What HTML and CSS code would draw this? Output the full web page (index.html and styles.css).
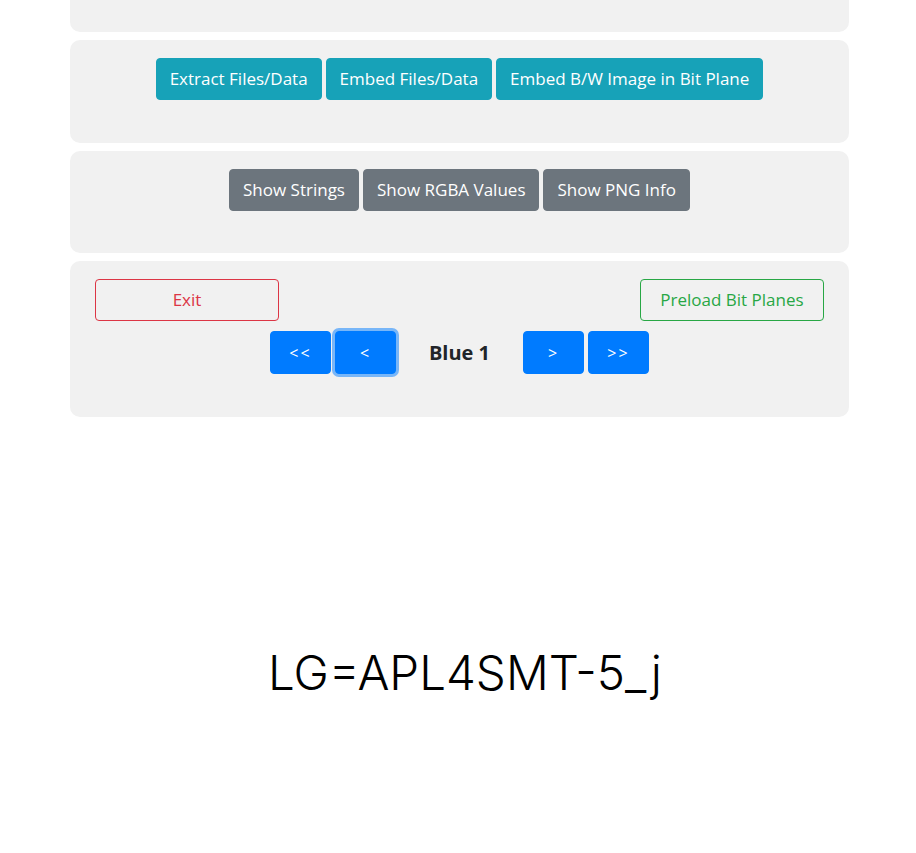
FILE: index.html
```html
<!DOCTYPE html>
<html lang="en">
<head>
    <meta charset="UTF-8">
    <meta name="viewport" content="width=device-width, initial-scale=1.0">
    <title>Bit Plane Viewer</title>
    <link rel="stylesheet" href="styles.css">
</head>
<body>
    <div class="container">
        <div class="panel panel-cut"></div>

        <div class="panel">
            <div class="btn-row">
                <button class="btn btn-info">Extract Files/Data</button>
                <button class="btn btn-info">Embed Files/Data</button>
                <button class="btn btn-info">Embed B/W Image in Bit Plane</button>
            </div>
        </div>

        <div class="panel">
            <div class="btn-row">
                <button class="btn btn-secondary">Show Strings</button>
                <button class="btn btn-secondary">Show RGBA Values</button>
                <button class="btn btn-secondary">Show PNG Info</button>
            </div>
        </div>

        <div class="panel panel-nav">
            <div class="top-row">
                <button class="btn btn-wide btn-outline-danger">Exit</button>
                <button class="btn btn-wide btn-outline-success">Preload Bit Planes</button>
            </div>
            <div class="nav-row">
                <button class="btn btn-nav">&lt;&lt;</button>
                <button class="btn btn-nav focused">&lt;</button>
                <span class="plane-label">Blue 1</span>
                <button class="btn btn-nav">&gt;</button>
                <button class="btn btn-nav">&gt;&gt;</button>
            </div>
        </div>
    </div>

    <!-- rendered bit plane output -->
    <div class="output">LG=APL4SMT-5_j</div>
</body>
</html>
```

FILE: styles.css
```css
body {
    margin: 0;
    font-family: 'Open Sans', sans-serif;
    background-color: #fff;
    color: #212529;
}
.container {
    width: 779px;
    margin-left: 70px;
}
.panel {
    background-color: #f1f1f1;
    border-radius: 10px;
    padding: 18px 25px 42.5px;
    margin-bottom: 8px;
}
.panel-cut {
    height: 32px;
    padding: 0;
    border-radius: 0 0 10px 10px;
}
.btn-row {
    display: flex;
    justify-content: center;
    gap: 4px;
}
.btn {
    font-family: inherit;
    font-size: 17px;
    line-height: 24px;
    height: 42px;
    padding: 8px 13px;
    border: 1px solid transparent;
    border-radius: 4px;
    color: #fff;
    cursor: pointer;
}
.btn-info {
    background-color: #17a2b8;
    border-color: #17a2b8;
}
.btn-secondary {
    background-color: #6c757d;
    border-color: #6c757d;
}
.top-row {
    display: flex;
    justify-content: space-between;
}
.btn-wide {
    width: 184px;
    background: transparent;
}
.btn-outline-danger {
    color: #dc3545;
    border-color: #dc3545;
}
.btn-outline-success {
    color: #28a745;
    border-color: #28a745;
}
.nav-row {
    display: flex;
    justify-content: center;
    align-items: center;
    gap: 4px;
    margin-top: 10px;
}
.btn-nav {
    width: 61px;
    height: 43px;
    font-size: 16px;
    letter-spacing: 2px;
    background-color: #007bff;
    border-color: #007bff;
}
.btn-nav.focused {
    box-shadow: 0 0 0 3px rgba(0, 123, 255, 0.5);
}
.plane-label {
    width: 119px;
    text-align: center;
    font-size: 20px;
    font-weight: bold;
}
.output {
    margin-top: 227px;
    padding-left: 14px;
    text-align: center;
    font-family: 'Inter', sans-serif;
    font-weight: 300;
    font-size: 47.5px;
    color: #000;
}
```
